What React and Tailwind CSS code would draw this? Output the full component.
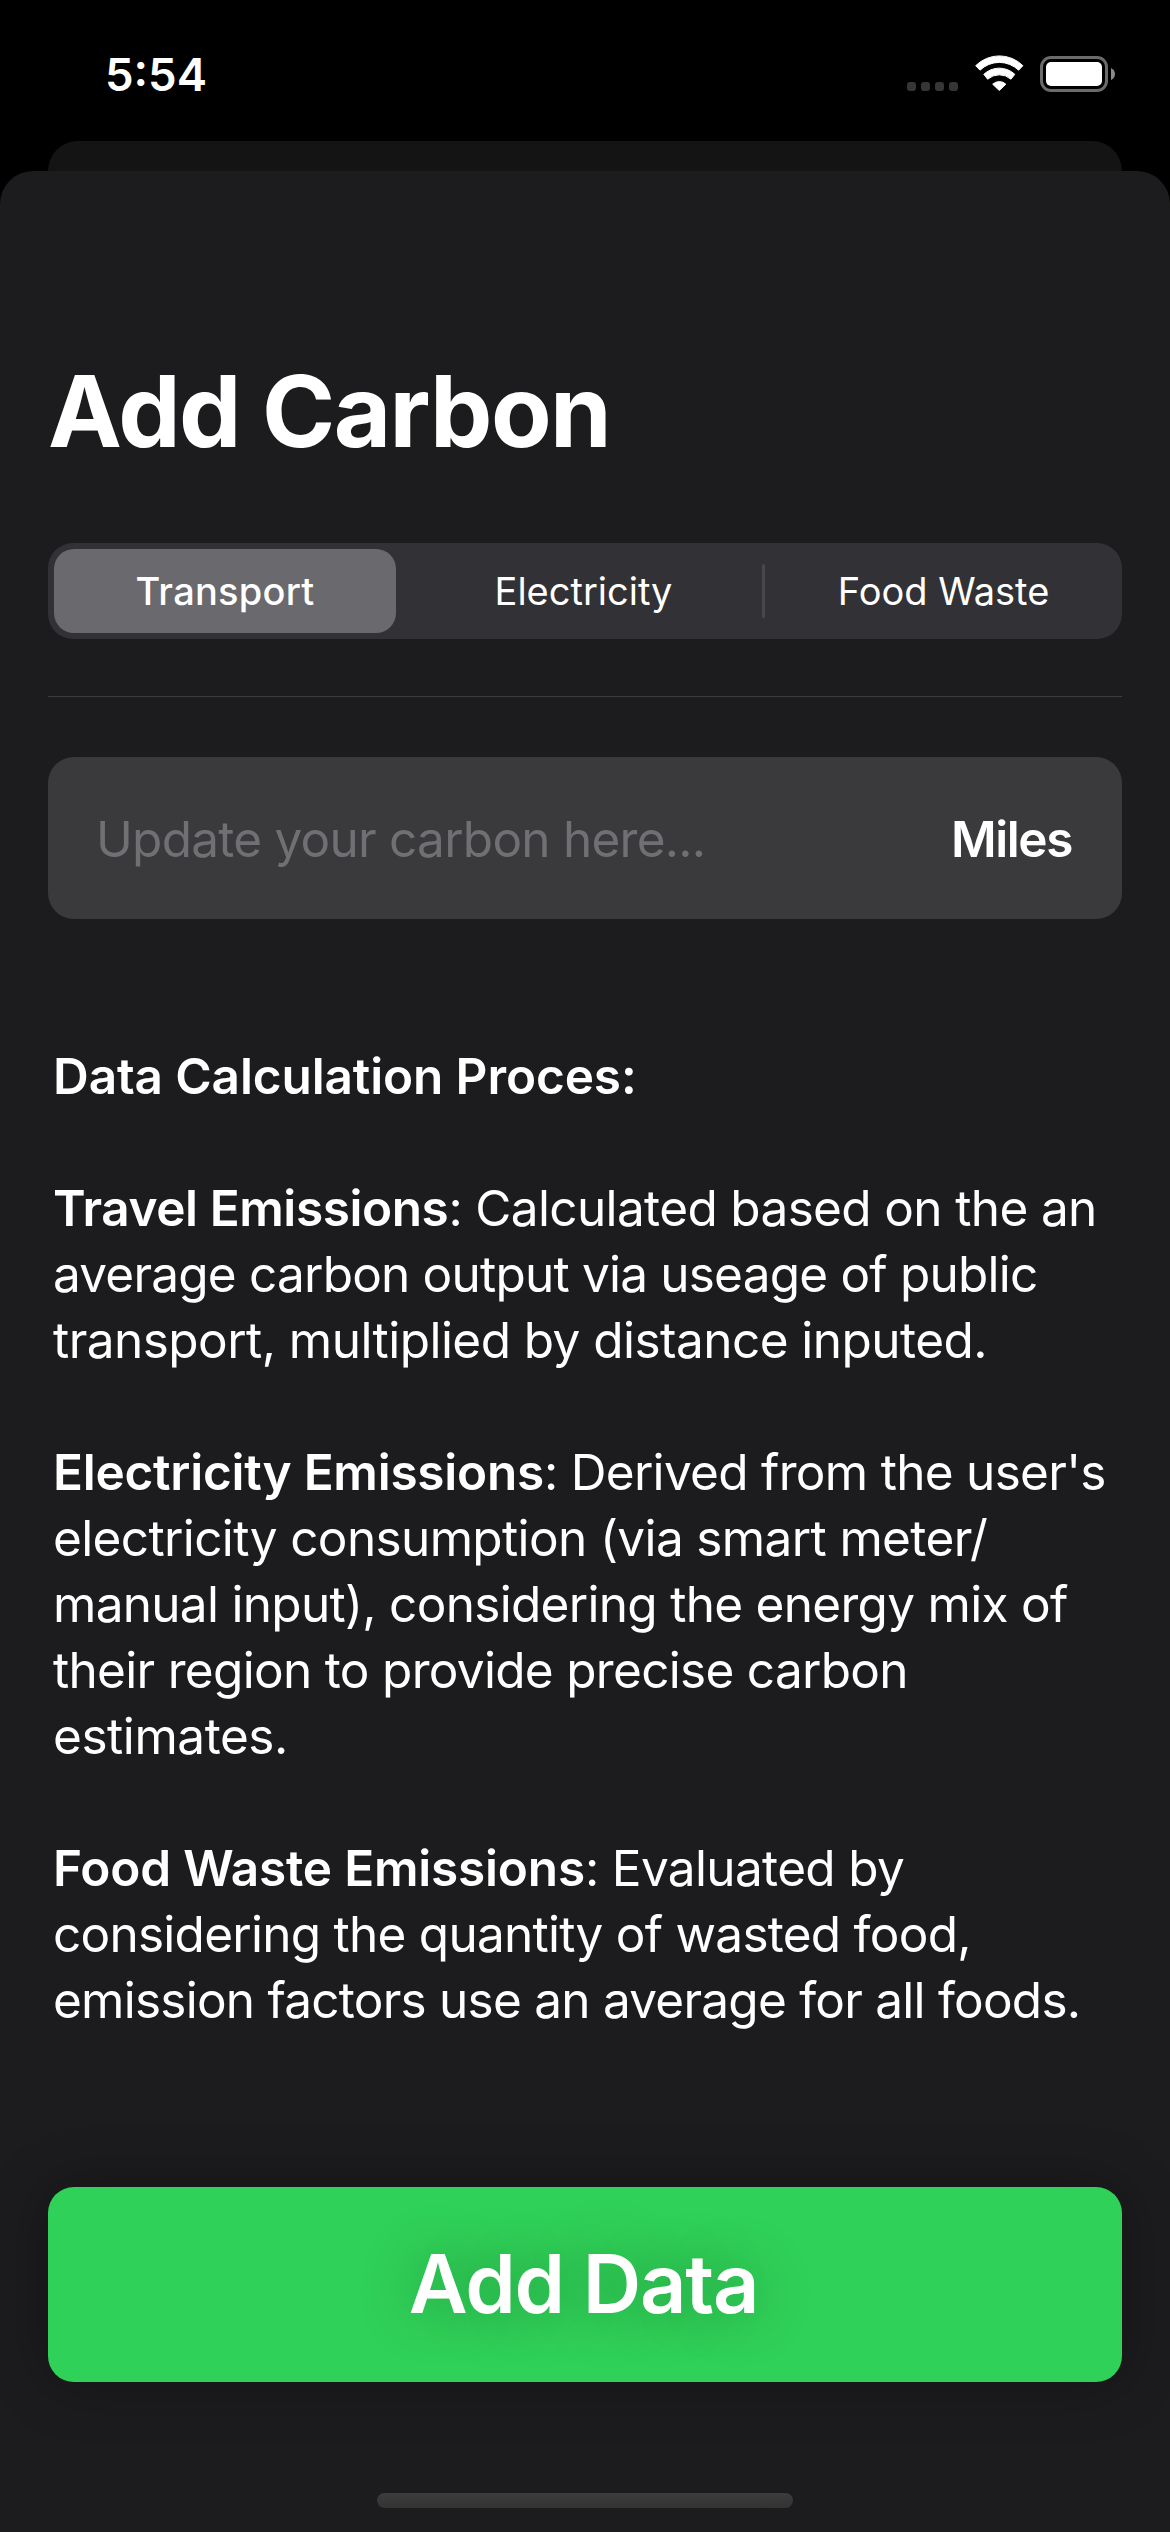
const SEMI = 'font-semibold ';

const lines = [
  [['Data Calculation Proces:', SEMI + 'tracking-[-0.11px]']],
  [],
  [['Travel Emissions', SEMI + 'tracking-[-0.41px]'], [': Calculated based on the an', 'tracking-[-0.64px]']],
  [['average carbon output via useage of public', 'tracking-[-0.79px]']],
  [['transport, multiplied by distance inputed.', 'tracking-[-0.54px]']],
  [],
  [['Electricity Emissions', SEMI + 'tracking-[-0.24px]'], [": Derived from the user's", 'tracking-[-0.7px]']],
  [['electricity consumption (via smart meter/', 'tracking-[-0.63px]']],
  [['manual input), considering the energy mix of', 'tracking-[-0.7px]']],
  [['their region to provide precise carbon', 'tracking-[-0.69px]']],
  [['estimates.', 'tracking-[-0.44px]']],
  [],
  [['Food Waste Emissions', SEMI + 'tracking-[-0.19px]'], [': Evaluated by', 'tracking-[-0.65px]']],
  [['considering the quantity of wasted food,', 'tracking-[-0.74px]']],
  [['emission factors use an average for all foods.', 'tracking-[-0.76px]']],
];

function StatusBar() {
  return (
    <header className="h-[141px] shrink-0 flex justify-between items-start pl-[105px] pr-[55px]">
      <div className="pt-[45px] text-[45.5px] leading-[60px] font-semibold">5:54</div>
      <div className="pt-[55px] flex items-start">
        <div className="mt-[27px] flex gap-[5px]">
          {[0, 1, 2, 3].map((i) => (
            <span key={i} className="size-[9px] rounded-[3px] bg-[#363636]" />
          ))}
        </div>
        <svg className="ml-[17px] w-[49px] h-[36px]" viewBox="0 0 49 36" fill="#fff" stroke="#fff" strokeWidth="1" strokeLinejoin="round">
          <path d="M0.7 10.7A33.3 33.3 0 0 1 47.9 10.7L43.6 15.2A27.8 27.8 0 0 0 5 15.2Z" />
          <path d="M8.8 19.3A22.6 22.6 0 0 1 39.8 19.3L35.9 24.2A17.6 17.6 0 0 0 12.7 24.2Z" />
          <path d="M17.7 29.2A9.6 9.6 0 0 1 30.9 29.2L24.3 35.5Z" />
        </svg>
        <div className="ml-[16px] mt-px flex items-center">
          <div className="w-[68px] h-[36px] rounded-[11px] border-[3px] border-[#6b6b6b] p-[3px]">
            <div className="size-full rounded-[5px] bg-white" />
          </div>
          <svg className="ml-[3px] w-[4px] h-[12px]" viewBox="0 0 4 12">
            <path d="M0 0Q4 2 4 6T0 12Z" fill="#8a8a8a" />
          </svg>
        </div>
      </div>
    </header>
  );
}

function Segments() {
  return (
    <div className="mt-[82px] h-[96px] shrink-0 bg-[#313136] rounded-[25px] p-[6px] flex items-center text-[38px] whitespace-nowrap">
      <div className="w-[342px] h-[84px] rounded-[20px] bg-[#69696e] flex items-center justify-center font-medium">
        <span className="tracking-[0.25px]">Transport</span>
      </div>
      <div className="w-[366px] flex justify-center pl-[9px]">
        <span>Electricity</span>
      </div>
      <div className="w-[3px] h-[54px] rounded-full bg-[#48484c]" />
      <div className="flex-1 flex justify-center pl-[6px]">
        <span>Food Waste</span>
      </div>
    </div>
  );
}

export default function App() {
  return (
    <div className="w-[1170px] h-[2532px] bg-black text-white font-[Inter,sans-serif] overflow-hidden flex flex-col">
      <StatusBar />
      <div className="h-[30px] shrink-0 mx-[48px] bg-[#141414] rounded-t-[30px]" />
      <main className="flex-1 bg-[#1c1c1e] rounded-t-[33px] px-[48px] flex flex-col">
        <h1 className="mt-[190px] text-[99px] leading-[100px] font-bold whitespace-nowrap tracking-[-1.5px]">Add Carbon</h1>
        <Segments />
        <div className="mt-[57px] h-px shrink-0 bg-[#3b3b3d]" />
        <div className="mt-[60px] h-[162px] shrink-0 rounded-[26px] bg-[#3a3a3c] pl-[48px] pr-[50px] pt-[2px] flex items-center justify-between text-[49.5px] whitespace-nowrap">
          <span className="text-[#6f6f74] tracking-[-0.75px]">Update your carbon here...</span>
          <span className="font-semibold tracking-[-1.4px]">Miles</span>
        </div>
        <div className="mt-[124px] pl-[5px]">
          {lines.map((line, i) => (
            <p key={i} className="h-[66px] text-[49.5px] leading-[66px] whitespace-nowrap">
              {line.map(([text, style]) => (
                <span key={text} className={style}>{text}</span>
              ))}
            </p>
          ))}
        </div>
        <button className="mt-[154px] h-[195px] shrink-0 rounded-[26px] bg-[#30d158] shadow-[0_0_60px_rgba(0,0,0,0.3)] flex items-center justify-center pr-[3px] text-[81px] font-semibold tracking-[-1.3px] [text-shadow:0_0_60px_rgba(0,0,0,0.33)]">
          Add Data
        </button>
        <div className="mt-[111px] mx-auto w-[416px] h-[15px] rounded-full bg-linear-to-b from-[#3c3c3c] to-[#333333]" />
      </main>
    </div>
  );
}
